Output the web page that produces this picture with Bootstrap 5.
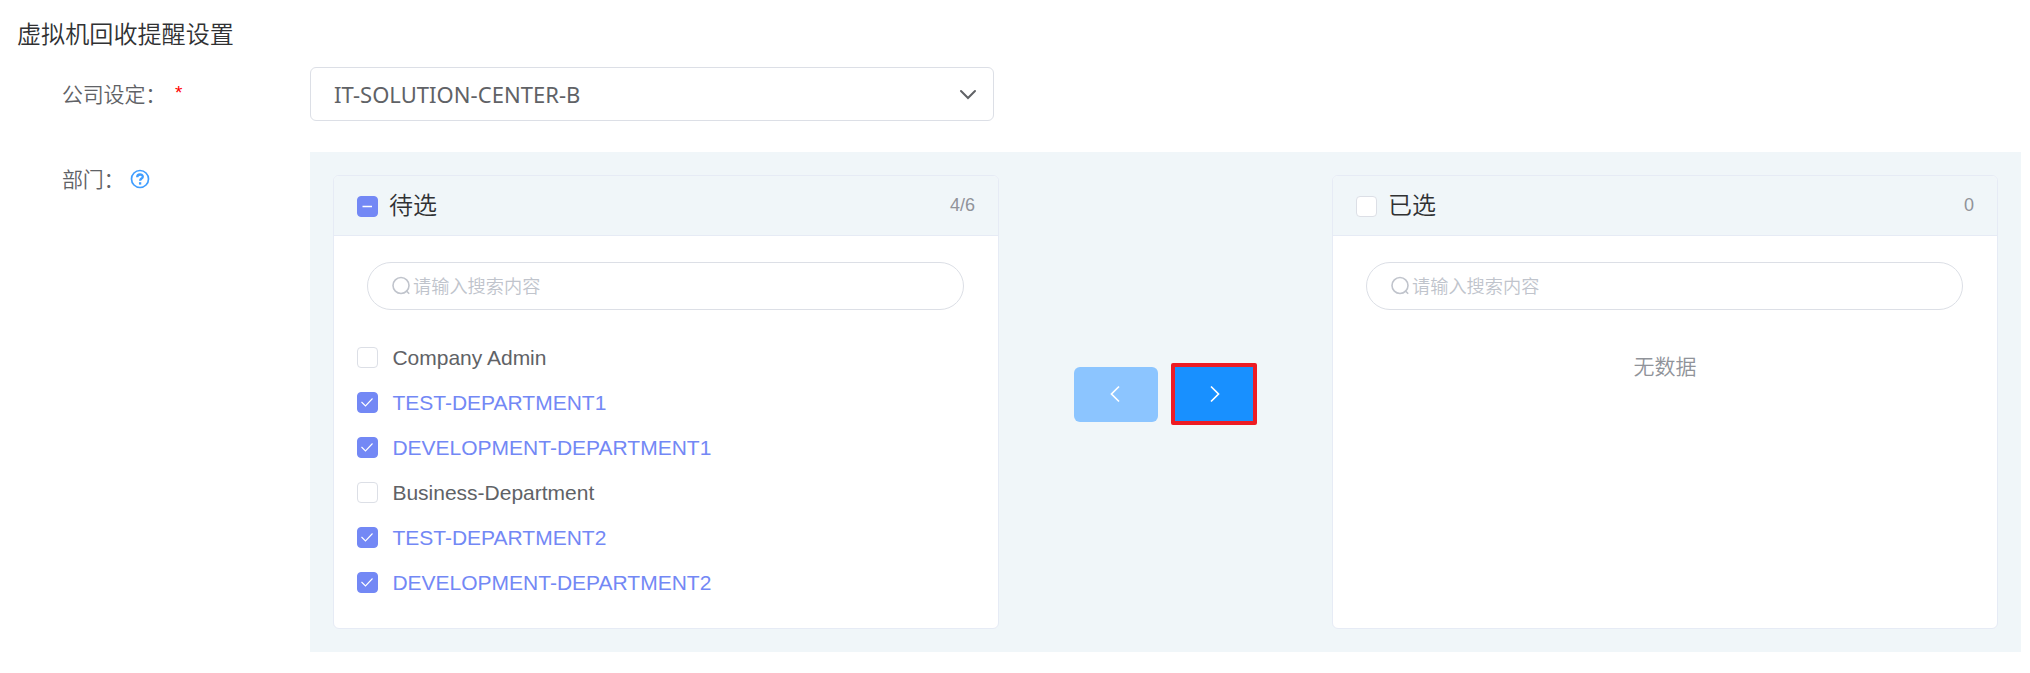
<!DOCTYPE html>
<html lang="zh-CN">
<head>
<meta charset="utf-8">
<title>虚拟机回收提醒设置</title>
<link rel="stylesheet" href="https://cdn.jsdelivr.net/npm/bootstrap@5.3.0/dist/css/bootstrap.min.css">
<style>
body{font-family:"Liberation Sans","Noto Sans CJK SC",sans-serif;font-size:21px;line-height:1.5;color:#606266;overflow:hidden}
.cjk{font-family:"Noto Sans CJK SC",sans-serif;font-weight:350}
.page-title{font-size:24.1px;line-height:36px;color:#303133;padding:15px 0 0 17px;height:67px}
.field-label{width:310px;padding-left:62px;flex:none;color:#606266}
.field-label span:first-child{padding-top:11px;letter-spacing:-.2px}
.field-label .star{font-family:"Liberation Sans",sans-serif;font-size:19px;color:#f00;padding:12px 0 0 9px}
.company-row{height:85px}
.picker{width:684px;height:54px;border:1px solid #dcdfe6;border-radius:6px;padding:0 16px 0 23px}
.picker-text{font-family:"Noto Sans",sans-serif;font-size:22px;letter-spacing:.04px;white-space:nowrap}
.help{margin:17px 0 0 6px}
.transfer{width:1711px;height:500px;background:#f0f6f9;padding:23px}
.panel{width:666px;height:454px;border:1px solid #e6ebf5;border-radius:6px;background:#fff;overflow:hidden}
.panel-head{height:60px;background:#f0f6f9;border-bottom:1px solid #e6ebf5;padding:0 23px}
.panel-head .box{margin-top:2px}
.panel-title{font-size:24px;line-height:36px;color:#303133;margin:-4px 0 0 11px}
.count{font-size:18px;color:#909399}
.search{height:48px;margin:26px 34px 25px 33px;border:1px solid #dcdfe6;border-radius:24px;padding-left:23px;color:#c0c4cc;font-size:18.2px}
.search span{margin-left:2px}
.box{width:21px;height:21px;border:1px solid #dcdfe6;border-radius:4px;background:#fff;flex:none}
.box.on{background:#7388f5;border-color:#7388f5}
.box svg{display:block;margin:-1px}
.item{height:45px;padding-left:23px;gap:14.4px}
.item.on{color:#7388f5}
.empty{color:#909399;line-height:32px;padding-top:14px}
.moves{padding:188px 0 0 75px;gap:13px}
.move{width:84px;height:55px;border:0;border-radius:6px;background:#8cc5ff;padding:0 2px 0 0}
.move-next{width:86px;height:62px;background:#1890ff;border:4px solid #ed1c24;border-radius:2px;padding:0 0 0 2px}
</style>
</head>
<body>
<h1 class="page-title cjk mb-0">虚拟机回收提醒设置</h1>
<div class="company-row d-flex">
  <div class="field-label cjk d-flex"><span>公司设定：</span><span class="star">*</span></div>
  <div class="picker d-flex align-items-center justify-content-between">
    <span class="picker-text">IT-SOLUTION-CENTER-B</span>
    <svg width="18" height="12" viewBox="0 0 18 12" fill="none" stroke="#606266" stroke-width="2" stroke-linecap="round"><path d="M2 3 9 10 16 3"/></svg>
  </div>
</div>
<div class="d-flex">
  <div class="field-label cjk d-flex"><span>部门：</span>
    <svg class="help" width="20" height="20" viewBox="0 0 20 20" fill="none" stroke="#409eff" stroke-width="1.700"><circle cx="10" cy="10" r="8.500"/><path d="M7.200 8.300c0-3.800 5.600-3.500 5.600-.6 0 1.900-2.700 1.800-2.700 4" stroke-width="2.300"/><path d="M10.100 13.200v2.400" stroke-width="2.300"/></svg></div>
  <div class="transfer d-flex align-items-start">
    <section class="panel">
      <header class="panel-head d-flex align-items-center"><span class="box on"><svg width="21" height="21" stroke="#fff" stroke-width="1.500"><path d="M5.500 10.500h9.500"/></svg></span><span class="panel-title cjk">待选</span><span class="count ms-auto">4/6</span></header>
      <div class="search cjk d-flex align-items-center"><svg width="20" height="20" viewBox="0 0 20 20" fill="none" stroke="#c0c4cc" stroke-width="1.600"><circle cx="10" cy="9.500" r="8"/><path d="m15 14.500 3.200 3.200"/></svg><span>请输入搜索内容</span></div>
      <div class="item d-flex align-items-center"><span class="box"></span>Company Admin</div>
      <div class="item on d-flex align-items-center"><span class="box on"><svg width="21" height="21" fill="none" stroke="#fff" stroke-width="1.100"><path d="m4.500 10 4 4 7-7.500"/></svg></span>TEST-DEPARTMENT1</div>
      <div class="item on d-flex align-items-center"><span class="box on"><svg width="21" height="21" fill="none" stroke="#fff" stroke-width="1.100"><path d="m4.500 10 4 4 7-7.500"/></svg></span>DEVELOPMENT-DEPARTMENT1</div>
      <div class="item d-flex align-items-center"><span class="box"></span>Business-Department</div>
      <div class="item on d-flex align-items-center"><span class="box on"><svg width="21" height="21" fill="none" stroke="#fff" stroke-width="1.100"><path d="m4.500 10 4 4 7-7.500"/></svg></span>TEST-DEPARTMENT2</div>
      <div class="item on d-flex align-items-center"><span class="box on"><svg width="21" height="21" fill="none" stroke="#fff" stroke-width="1.100"><path d="m4.500 10 4 4 7-7.500"/></svg></span>DEVELOPMENT-DEPARTMENT2</div>
    </section>
    <div class="moves d-flex align-items-center flex-fill">
      <button class="move d-flex align-items-center justify-content-center" aria-label="左移"><svg width="10" height="18" viewBox="0 0 10 18" fill="none" stroke="#fff" stroke-width="1.700"><path d="M9 1.500 1.500 9 9 16.500"/></svg></button>
      <button class="move move-next d-flex align-items-center justify-content-center" aria-label="右移"><svg width="10" height="18" viewBox="0 0 10 18" fill="none" stroke="#fff" stroke-width="1.700"><path d="M1 1.500 8.500 9 1 16.500"/></svg></button>
    </div>
    <section class="panel">
      <header class="panel-head d-flex align-items-center"><span class="box"></span><span class="panel-title cjk">已选</span><span class="count ms-auto">0</span></header>
      <div class="search cjk d-flex align-items-center"><svg width="20" height="20" viewBox="0 0 20 20" fill="none" stroke="#c0c4cc" stroke-width="1.600"><circle cx="10" cy="9.500" r="8"/><path d="m15 14.500 3.200 3.200"/></svg><span>请输入搜索内容</span></div>
      <div class="empty cjk text-center">无数据</div>
    </section>
  </div>
</div>
<script src="https://cdn.jsdelivr.net/npm/bootstrap@5.3.0/dist/js/bootstrap.bundle.min.js"></script>
</body>
</html>
